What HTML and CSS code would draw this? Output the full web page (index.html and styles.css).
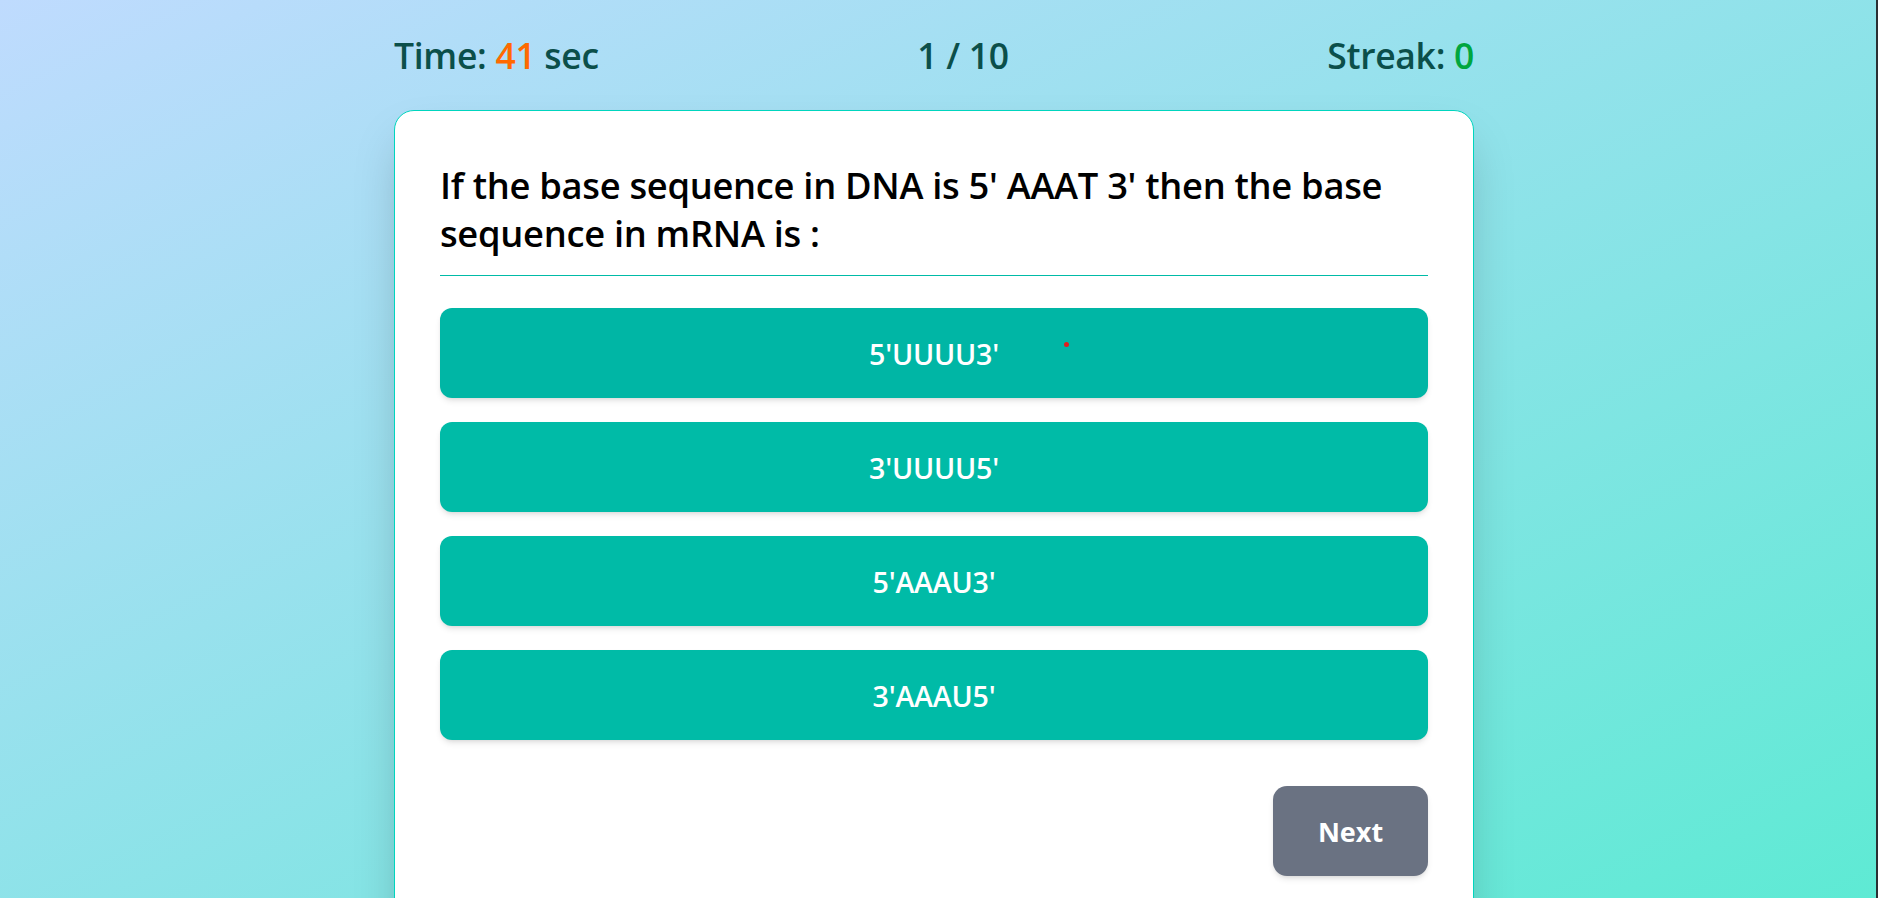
FILE: index.html
```html
<!DOCTYPE html>
<html lang="en">
<head>
<meta charset="utf-8">
<title>Quiz</title>
<link rel="stylesheet" href="styles.css">
</head>
<body>
<div class="page">
  <div class="quiz">
    <header class="stats">
      <div class="stat">Time: <span class="time">41</span> sec</div>
      <div class="stat">1 / 10</div>
      <div class="stat">Streak: <span class="streak">0</span></div>
    </header>
    <section class="card">
      <h2 class="question">If the base sequence in DNA is 5' AAAT 3' then the base sequence in mRNA is :</h2>
      <div class="options">
        <button class="option option-hover">5'UUUU3'<span class="cursor-dot"></span></button>
        <button class="option">3'UUUU5'</button>
        <button class="option">5'AAAU3'</button>
        <button class="option">3'AAAU5'</button>
      </div>
      <div class="actions">
        <button class="next">Next</button>
      </div>
    </section>
  </div>
</div>
</body>
</html>
```

FILE: styles.css
```css
* { box-sizing: border-box; }
html, body { margin: 0; height: 100%; }
body {
  font-family: "Open Sans", "Noto Sans", sans-serif;
  background: linear-gradient(to bottom right, #bfdbfe, #5eead4);
  border-right: 2px solid #2a2f33;
  overflow: hidden;
}
.page {
  min-height: 100%;
  padding: 35px 8px 0 0;
}
.quiz {
  width: 1080px;
  margin: 0 auto;
}
.stats {
  display: flex;
  justify-content: space-between;
  align-items: center;
  height: 40px;
  color: #0b4f4a;
  font-size: 35.5px;
  font-weight: 600;
  line-height: 40px;
  letter-spacing: -0.3px;
}
.time { color: #ff6900; }
.streak { color: #00a63e; }
.card {
  margin-top: 35px;
  background: #fff;
  border: 1px solid #00d5be;
  border-radius: 20px;
  padding: 50px 45px 60px;
  box-shadow: 0 25px 50px -12px rgba(0, 0, 0, 0.25);
}
.question {
  margin: 0;
  padding-bottom: 18px;
  border-bottom: 1px solid #00bba7;
  font-size: 36.3px;
  font-weight: 600;
  line-height: 48px;
  letter-spacing: -0.3px;
  color: #000;
}
.options {
  margin-top: 32px;
  display: flex;
  flex-direction: column;
  gap: 24px;
}
.option {
  position: relative;
  height: 90px;
  border: none;
  border-radius: 12px;
  background: #00bba7;
  color: #fff;
  font-family: inherit;
  font-size: 28.6px;
  font-weight: 600;
  letter-spacing: -0.2px;
  box-shadow: 0 4px 6px -1px rgba(0,0,0,0.1), 0 2px 4px -2px rgba(0,0,0,0.1);
}
.option-hover { background: #00b6a5; }
.cursor-dot {
  position: absolute;
  left: 624px;
  top: 34px;
  width: 5px;
  height: 5px;
  border-radius: 50%;
  background: #e11d1d;
}
.actions {
  margin-top: 46px;
  display: flex;
  justify-content: flex-end;
}
.next {
  width: 155px;
  height: 90px;
  border: none;
  border-radius: 14px;
  background: #6a7282;
  color: #fff;
  font-family: inherit;
  font-size: 27px;
  font-weight: 700;
  box-shadow: 0 4px 6px -1px rgba(0,0,0,0.1), 0 2px 4px -2px rgba(0,0,0,0.1);
}
```
